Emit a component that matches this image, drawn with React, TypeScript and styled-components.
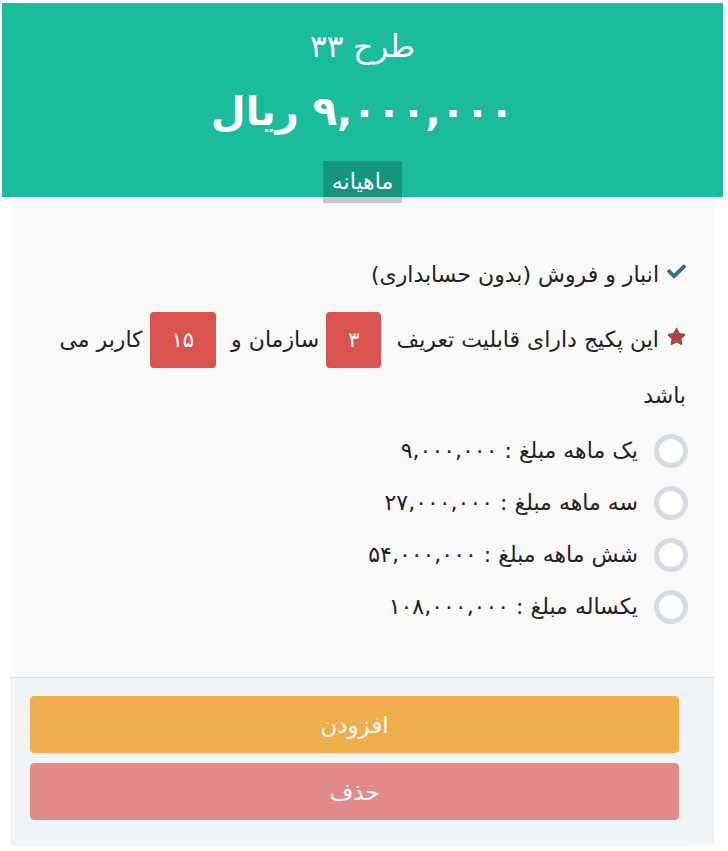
import React from 'react';
import styled, { createGlobalStyle } from "styled-components";
import { FaCheck, FaStar } from "react-icons/fa";

const GlobalStyle = createGlobalStyle`
  body {
    margin: 0;
    background: #ffffff;
    font-family: "DejaVu Sans", "Noto Sans", sans-serif;
  }
`

type Option = {
    label: string;
    amount: string;
}

const options: Option[] = [
    {label: "یک ماهه مبلغ", amount: "۹,۰۰۰,۰۰۰"},
    {label: "سه ماهه مبلغ", amount: "۲۷,۰۰۰,۰۰۰"},
    {label: "شش ماهه مبلغ", amount: "۵۴,۰۰۰,۰۰۰"},
    {label: "یکساله مبلغ", amount: "۱۰۸,۰۰۰,۰۰۰"},
]

const App = () => {
    return (
        <Wrapper dir="rtl">
            <GlobalStyle/>
            <Header>
                <PlanTitle>طرح ۳۳</PlanTitle>
                <Price>۹,۰۰۰,۰۰۰ ریال</Price>
                <Period>ماهیانه</Period>
            </Header>
            <Panel>
                <Body>
                    <Feature>
                        <CheckIcon><FaCheck/></CheckIcon>
                        انبار و فروش (بدون حسابداری)
                    </Feature>
                    <Feature>
                        <StarIcon><FaStar/></StarIcon>
                        این پکیج دارای قابلیت تعریف <Count>۳</Count> سازمان و <Count>۱۵</Count> کاربر می باشد
                    </Feature>
                    <Options>
                        {options.map(o => (
                            <OptionRow key={o.label}>
                                <Radio/>
                                <span>{o.label} : {o.amount}</span>
                            </OptionRow>
                        ))}
                    </Options>
                </Body>
                <Footer>
                    <Button $color="#f0ad4e">افزودن</Button>
                    <Button $color="#d9534f" $faded>حذف</Button>
                </Footer>
            </Panel>
        </Wrapper>
    );
};

export default App;

const Wrapper = styled.div`
  width: 721px;
  padding: 3px 0 0 2px;
  direction: rtl;
`

const Header = styled.div`
  background: #1abc9c;
  color: #ffffff;
  text-align: center;
  padding-top: 22px;
  height: 172px;
  display: flex;
  flex-direction: column;
  align-items: center;
`

const PlanTitle = styled.div`
  font-size: 31px;
  line-height: 42px;
`

const Price = styled.div`
  font-size: 40px;
  font-weight: bold;
  line-height: 60px;
  margin-top: 14px;
`

const Period = styled.div`
  position: relative;
  z-index: 1;
  margin-top: auto;
  margin-bottom: -6px;
  background: rgba(0, 0, 0, 0.2);
  font-size: 22px;
  line-height: 42px;
  padding: 0 9px;
`

const Panel = styled.div`
  margin: 0 9px 0 8px;
  background: #f9f9f9;
  border-radius: 0 0 4px 4px;
  overflow: hidden;
`

const Body = styled.div`
  padding: 51px 28px 53px 26px;
  color: #222222;
  font-size: 22px;
`

const Feature = styled.div`
  line-height: 53px;
  margin-bottom: 12px;
`

const IconBox = styled.span`
  display: inline-block;
  vertical-align: middle;
  font-size: 19px;
  margin-left: 8px;
  line-height: 1;
  position: relative;
  top: -3px;
`

const CheckIcon = styled(IconBox)`
  color: #31708f;
`

const StarIcon = styled(IconBox)`
  color: #a94442;
`

const Count = styled.span`
  display: inline-block;
  background: #d9534f;
  color: #ffffff;
  font-size: 21px;
  border-radius: 4px;
  line-height: 56px;
  padding: 0 22px;
  margin: 0 8px 0 0;
  vertical-align: middle;
  position: relative;
  top: -1px;
`

const Options = styled.div`
  display: flex;
  flex-direction: column;
  gap: 18px;
  margin-right: -2px;
`

const OptionRow = styled.label`
  display: flex;
  align-items: center;
  gap: 16px;
  line-height: 34px;
`

const Radio = styled.span`
  width: 34px;
  height: 34px;
  box-sizing: border-box;
  border: 5px solid #d5dbe0;
  border-radius: 50%;
  background: #ffffff;
  flex-shrink: 0;
`

const Footer = styled.div`
  background: #f1f4f7;
  border-top: 1px solid #dcdfe3;
  padding: 18px 35px 26px 20px;
  display: flex;
  flex-direction: column;
  gap: 10px;
`

const Button = styled.button<{ $color: string; $faded?: boolean }>`
  height: 57px;
  border: 1px solid ${p => p.$color};
  border-radius: 4px;
  background: ${p => p.$color};
  opacity: ${p => p.$faded ? 0.65 : 1};
  color: #ffffff;
  font-family: "DejaVu Sans", "Noto Sans", sans-serif;
  font-size: 23px;
  cursor: pointer;
`
